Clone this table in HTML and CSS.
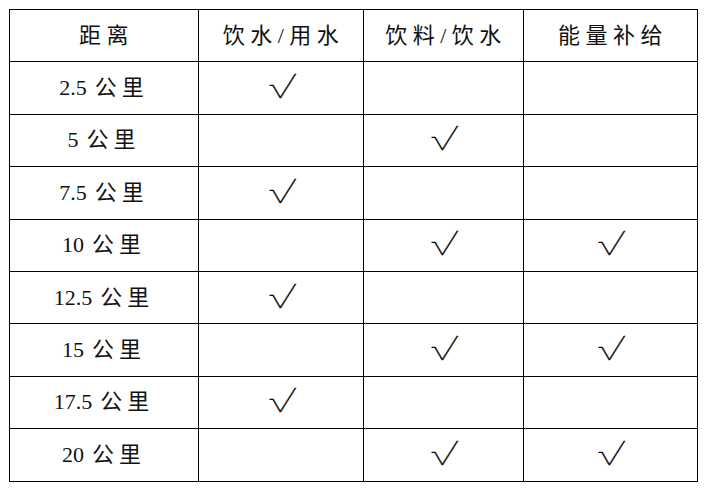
FILE: index.html
```html
<!DOCTYPE html>
<html lang="zh-CN">
<head>
<meta charset="utf-8">
<link rel="stylesheet" href="styles.css">
</head>
<body>
<table class="supply">
  <colgroup>
    <col class="c1"><col class="c2"><col class="c3"><col class="c4">
  </colgroup>
  <thead>
    <tr><th>距离</th><th>饮水/用水</th><th>饮料/饮水</th><th>能量补给</th></tr>
  </thead>
  <tbody>
    <tr><td>2.5 <span class="unit">公里</span></td><td class="ck"><span class="tick">√</span></td><td></td><td></td></tr>
    <tr><td>5 <span class="unit">公里</span></td><td></td><td class="ck"><span class="tick">√</span></td><td></td></tr>
    <tr><td>7.5 <span class="unit">公里</span></td><td class="ck"><span class="tick">√</span></td><td></td><td></td></tr>
    <tr><td>10 <span class="unit">公里</span></td><td></td><td class="ck"><span class="tick">√</span></td><td class="ck"><span class="tick">√</span></td></tr>
    <tr><td>12.5 <span class="unit">公里</span></td><td class="ck"><span class="tick">√</span></td><td></td><td></td></tr>
    <tr><td>15 <span class="unit">公里</span></td><td></td><td class="ck"><span class="tick">√</span></td><td class="ck"><span class="tick">√</span></td></tr>
    <tr><td>17.5 <span class="unit">公里</span></td><td class="ck"><span class="tick">√</span></td><td></td><td></td></tr>
    <tr><td>20 <span class="unit">公里</span></td><td></td><td class="ck"><span class="tick">√</span></td><td class="ck"><span class="tick">√</span></td></tr>
  </tbody>
</table>
</body>
</html>
```

FILE: styles.css
```css
html, body {
  margin: 0;
  padding: 0;
  background: #ffffff;
}
body {
  padding: 9px 0 0 9px;
}
.supply {
  border-collapse: collapse;
  table-layout: fixed;
  width: 688px;
  font-family: "Liberation Serif", "Noto Sans CJK SC", serif;
  font-size: 22px;
  color: #111111;
}
.c1 { width: 189px; }
.c2 { width: 165px; }
.c3 { width: 160px; }
.c4 { width: 174px; }
.supply th,
.supply td {
  border: 1px solid #000000;
  height: 51.4px;
  padding: 0;
  text-align: center;
  vertical-align: middle;
  font-weight: 400;
  line-height: 1;
}
.supply th {
  letter-spacing: 5.5px;
  padding-left: 5px;
}
.unit {
  letter-spacing: 5px;
  margin-left: 2.5px;
}
.supply .ck {
  font-family: Inter, sans-serif;
  font-size: 30px;
  font-weight: 100;
  color: #000000;
}
.tick {
  display: inline-block;
  margin-left: 3px;
  font-weight: 100;
  -webkit-text-stroke: 0.35px #000000;
  transform: translateY(-2px) scale(1.5, 1.1);
}
```
